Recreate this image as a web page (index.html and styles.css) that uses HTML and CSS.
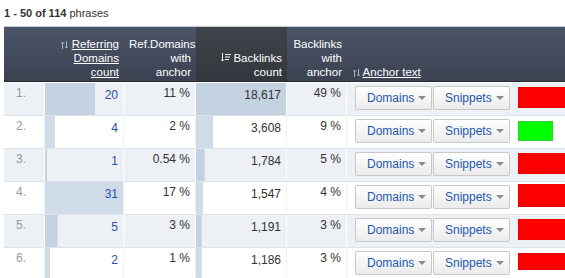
FILE: index.html
```html
<!DOCTYPE html>
<html>
<head>
<meta charset="utf-8">
<title>Anchor text phrases</title>
<link rel="stylesheet" href="styles.css">
</head>
<body>
<div class="summary"><b>1 - 50 of 114</b> phrases</div>
<table class="grid">
  <colgroup>
    <col class="c-num"><col class="c-ref"><col class="c-refa"><col class="c-bl"><col class="c-bla"><col class="c-anchor">
  </colgroup>
  <thead>
    <tr>
      <th class="h-num"></th>
      <th><svg class="ico-sort" width="7" height="8" viewBox="0 0 7 8"><path d="M1.5 8V1M0 2.5L1.5 1L3 2.5M5.5 0V7M4 5.5L5.5 7L7 5.5" stroke="#a9b3c1" fill="none"/></svg> <a href="#">Referring</a><br><a href="#">Domains</a><br><a href="#">count</a></th>
      <th>Ref.Domains<br>with<br>anchor</th>
      <th class="h-sorted"><svg class="ico-desc" width="10" height="9" viewBox="0 0 10 9"><path d="M1.5 0V8M0 6.5L1.5 8L3 6.5" stroke="#fff" fill="none"/><path d="M4 1.5h6M4 4h5M4 6.5h4" stroke="#fff" fill="none"/></svg>Backlinks<br>count</th>
      <th>Backlinks<br>with<br>anchor</th>
      <th class="h-anchor"><svg class="ico-sort" width="7" height="8" viewBox="0 0 7 8"><path d="M1.5 8V1M0 2.5L1.5 1L3 2.5M5.5 0V7M4 5.5L5.5 7L7 5.5" stroke="#a9b3c1" fill="none"/></svg> <a href="#">Anchor text</a></th>
    </tr>
  </thead>
  <tbody>
    <tr class="odd">
      <td class="num">1.</td>
      <td class="bar" style="--w:64.5%"><a href="#">20</a></td>
      <td>11 %</td>
      <td class="bar" style="--w:100%">18,617</td>
      <td>49 %</td>
      <td class="act"><div class="acts"><button class="btn">Domains<i class="caret"></i></button><button class="btn">Snippets<i class="caret"></i></button><span class="flag red"></span></div></td>
    </tr>
    <tr class="even">
      <td class="num">2.</td>
      <td class="bar" style="--w:12.9%"><a href="#">4</a></td>
      <td>2 %</td>
      <td class="bar" style="--w:19.4%">3,608</td>
      <td>9 %</td>
      <td class="act"><div class="acts"><button class="btn">Domains<i class="caret"></i></button><button class="btn">Snippets<i class="caret"></i></button><span class="flag green"></span></div></td>
    </tr>
    <tr class="odd">
      <td class="num">3.</td>
      <td class="bar" style="--w:3.2%"><a href="#">1</a></td>
      <td>0.54 %</td>
      <td class="bar" style="--w:9.6%">1,784</td>
      <td>5 %</td>
      <td class="act"><div class="acts"><button class="btn">Domains<i class="caret"></i></button><button class="btn">Snippets<i class="caret"></i></button><span class="flag red"></span></div></td>
    </tr>
    <tr class="even">
      <td class="num">4.</td>
      <td class="bar" style="--w:100%"><a href="#">31</a></td>
      <td>17 %</td>
      <td class="bar" style="--w:8.3%">1,547</td>
      <td>4 %</td>
      <td class="act"><div class="acts"><button class="btn">Domains<i class="caret"></i></button><button class="btn">Snippets<i class="caret"></i></button><span class="flag red tall"></span></div></td>
    </tr>
    <tr class="odd">
      <td class="num">5.</td>
      <td class="bar" style="--w:16.1%"><a href="#">5</a></td>
      <td>3 %</td>
      <td class="bar" style="--w:6.4%">1,191</td>
      <td>3 %</td>
      <td class="act"><div class="acts"><button class="btn">Domains<i class="caret"></i></button><button class="btn">Snippets<i class="caret"></i></button><span class="flag red"></span></div></td>
    </tr>
    <tr class="even">
      <td class="num">6.</td>
      <td class="bar" style="--w:6.5%"><a href="#">2</a></td>
      <td>1 %</td>
      <td class="bar" style="--w:6.4%">1,186</td>
      <td>3 %</td>
      <td class="act"><div class="acts"><button class="btn">Domains<i class="caret"></i></button><button class="btn">Snippets<i class="caret"></i></button><span class="flag red short"></span></div></td>
    </tr>
  </tbody>
</table>
</body>
</html>
```
FILE: styles.css
```css
* { box-sizing: border-box; }
html, body { margin: 0; padding: 0; background: #fff; overflow: hidden; }
body { width: 565px; height: 278px; font-family: "Liberation Sans", Arial, sans-serif; }

.summary { padding: 6px 0 6px 4px; font-size: 11px; line-height: 14px; color: #333; }
.summary b { color: #333; }

.grid { margin-left: 4px; border-collapse: separate; border-spacing: 0; table-layout: fixed; width: 561px; border-top: 1px solid #c6ccd4; }
.c-num { width: 41px; }
.c-ref { width: 79px; }
.c-refa { width: 72px; }
.c-bl { width: 91px; }
.c-bla { width: 60px; }
.c-anchor { width: 218px; }

.grid th { height: 55px; padding: 0 5px 2px 5px; border-bottom: 1px solid #262a30; background: linear-gradient(#4b5568, #3b4252); color: #fff; font-size: 11.5px; line-height: 14px; font-weight: normal; text-align: right; vertical-align: bottom; white-space: nowrap; }
.grid th a { color: #fff; text-decoration: underline; }
.grid th.h-sorted { background: linear-gradient(#3f444c, #33373d); }
.grid th.h-anchor { text-align: left; padding-left: 6px; }
.ico-sort { vertical-align: -1px; }
.ico-desc { vertical-align: 0; margin-right: 2px; }

.grid td { height: 33px; padding: 3px 5px 0 5px; border-right: 1px solid #fff; border-bottom: 1px solid #dfe4ea; font-size: 12px; line-height: 14px; color: #333; text-align: right; vertical-align: top; white-space: nowrap; }
.grid tbody tr:first-child td { height: 34px; border-top: 1px solid #fff; }
.grid tr.odd td { background-color: #edf0f4; }
.grid tr.even td { background-color: #fff; border-right-color: #eef1f4; }
.grid td.num { color: #999; padding-right: 18px; }
.grid td.bar { padding-top: 5px; background-image: linear-gradient(rgba(110, 145, 185, .32), rgba(110, 145, 185, .32)); background-repeat: no-repeat; background-size: var(--w) 100%; }
.grid td.bar a { color: #1f52a8; text-decoration: none; }
.grid td.act { padding: 3px 0 0 8px; text-align: left; border-right: none; overflow: hidden; }

.acts { display: flex; align-items: flex-start; gap: 1px; }
.btn { flex: none; display: flex; align-items: center; gap: 4px; width: 77px; height: 24px; padding: 0 0 0 11px; border: 1px solid #c8c8c8; border-radius: 2px; background: linear-gradient(#ffffff, #ebebeb); color: #2558b0; font-family: "Liberation Sans", Arial, sans-serif; font-size: 12px; line-height: 14px; cursor: pointer; }
.caret { display: block; width: 0; height: 0; border-left: 4px solid transparent; border-right: 4px solid transparent; border-top: 4px solid #8c8c8c; }

.flag { display: block; margin: 1px 0 0 7px; height: 21px; border: 1px solid; }
.flag.red { flex: 1 0 auto; background: #ff0000; border-color: #e80000; border-right: none; }
.flag.green { flex: none; width: 35px; margin-top: 2px; height: 20px; background: #00ff00; border-color: #33cc33; }
.flag.tall { height: 23px; margin-top: -1px; }
.flag.short { height: 17px; margin-top: 2px; }
```
